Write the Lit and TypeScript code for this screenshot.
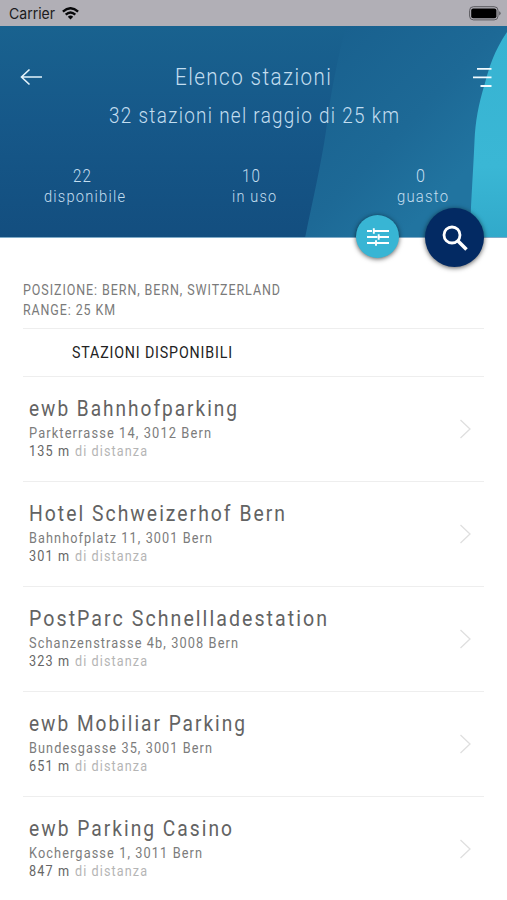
import { LitElement, html, css, svg } from "lit";
import { customElement, property } from "lit/decorators.js";

/** One line of condensed text, squeezed horizontally to a given width. */
@customElement("fit-text")
class FitText extends LitElement {
  @property({ type: Number }) width = 0;
  @property() text = "";

  static styles = css`
    :host { display: block; white-space: nowrap; }
    .t { display: inline-block; transform-origin: 0 50%; vertical-align: top; }
  `;

  render() {
    return html`<span class="t">${this.text}</span>`;
  }

  updated() {
    const el = this.renderRoot.querySelector(".t") as HTMLElement;
    const fit = () => {
      el.style.transform = "none";
      const spacing = parseFloat(getComputedStyle(el).letterSpacing) || 0;
      const natural = el.getBoundingClientRect().width - spacing;
      if (natural > 0) el.style.transform = `scaleX(${this.width / natural})`;
      this.style.width = `${this.width}px`;
    };
    fit();
    document.fonts.ready.then(fit);
  }
}

interface Station {
  name: string;
  nameW: number;
  address: string;
  addressW: number;
  distance: string;
  distanceW: number;
}

const stations: Station[] = [
  { name: "ewb Bahnhofparking", nameW: 208, address: "Parkterrasse 14, 3012 Bern", addressW: 182, distance: "135 m", distanceW: 40 },
  { name: "Hotel Schweizerhof Bern", nameW: 256, address: "Bahnhofplatz 11, 3001 Bern", addressW: 183, distance: "301 m", distanceW: 40 },
  { name: "PostParc Schnellladestation", nameW: 298, address: "Schanzenstrasse 4b, 3008 Bern", addressW: 209, distance: "323 m", distanceW: 40 },
  { name: "ewb Mobiliar Parking", nameW: 216, address: "Bundesgasse 35, 3001 Bern", addressW: 183, distance: "651 m", distanceW: 40 },
  { name: "ewb Parking Casino", nameW: 203, address: "Kochergasse 1, 3011 Bern", addressW: 173, distance: "847 m", distanceW: 40 },
];

const counters = [
  { value: "22", valueW: 18, label: "disponibile", labelW: 81 },
  { value: "10", valueW: 18, label: "in uso", labelW: 44 },
  { value: "0", valueW: 9, label: "guasto", labelW: 51 },
];

const backdrop = svg`
  <defs>
    <linearGradient id="base" x1="0" y1="0" x2="0" y2="1">
      <stop offset="0" stop-color="#19628f"/>
      <stop offset=".45" stop-color="#165889"/>
      <stop offset="1" stop-color="#134e7f"/>
    </linearGradient>
    <linearGradient id="mid" gradientUnits="userSpaceOnUse" x1="345" y1="0" x2="480" y2="130">
      <stop offset="0" stop-color="#19618f"/>
      <stop offset=".6" stop-color="#1d6996"/>
      <stop offset="1" stop-color="#2174a0"/>
    </linearGradient>
    <linearGradient id="cyan" x1="0" y1="0" x2="0" y2="1">
      <stop offset="0" stop-color="#37b3d2"/>
      <stop offset=".65" stop-color="#3ab7d5"/>
      <stop offset="1" stop-color="#31a9ca"/>
    </linearGradient>
  </defs>
  <rect width="507" height="212" fill="url(#base)"/>
  <path d="M305 212C313 173 321 139 326 105C330 70 338 30 346 0H507V212Z" fill="url(#mid)"/>
  <path d="M507 6C494 25 489 42 485 57C478 80 475.500 95 474.500 115C473 150 470.500 180 470 212H507Z" fill="url(#cyan)"/>
`;

@customElement("app-root")
class AppRoot extends LitElement {
  static styles = css`
    :host {
      display: flex;
      flex-direction: column;
      width: 507px;
      height: 900px;
      overflow: hidden;
      background: #fff;
      font-family: Roboto, "Liberation Sans", sans-serif;
      color: #666;
    }
    svg { display: block; flex: none; }
    .status {
      box-sizing: border-box;
      height: 26px;
      flex: none;
      display: flex;
      align-items: center;
      padding: 1px 6px 0 9px;
      background: #b1afb6;
      color: #1b1b20;
      font: 15px/24px Inter, sans-serif;
    }
    .wifi { margin-left: 7px; }
    .battery { margin-left: auto; }
    .header {
      position: relative;
      box-sizing: border-box;
      height: 212px;
      flex: none;
      padding-top: 36px;
      color: #c3def0;
      font-weight: 300;
      border-bottom: 1px solid #7fabc8;
    }
    .backdrop { position: absolute; left: 0; top: 0; }
    .bar, .subtitle, .counters { position: relative; }
    .bar {
      display: grid;
      grid-template-columns: 60px 1fr 60px;
      align-items: center;
      height: 30px;
    }
    .back { margin-left: 20px; }
    .menu { margin-left: 24px; }
    .title { justify-self: center; margin-right: 1px; font-size: 24.3px; line-height: 30px; letter-spacing: 1.7px; }
    .subtitle {
      display: flex;
      justify-content: center;
      margin-top: 9px;
      font-size: 22px;
      line-height: 30px;
      letter-spacing: 1.5px;
    }
    .counters {
      display: grid;
      grid-template-columns: repeat(3, 169px);
      margin-top: 35px;
      line-height: 20px;
      letter-spacing: 1.4px;
      font-weight: 350;
    }
    .counter { display: flex; flex-direction: column; align-items: center; }
    .value { font-size: 18px; margin-right: 5px; }
    .label { font-size: 17.2px; }
    .fab {
      position: absolute;
      display: grid;
      place-items: center;
      border-radius: 50%;
      box-shadow: 0 1px 5px rgba(0, 0, 0, .65);
    }
    .filter { left: 356px; top: 189px; width: 43px; height: 43px; background: #38b5d4; }
    .search { left: 425px; top: 182px; width: 59px; height: 59px; background: #032a63; }
    .content { padding: 42px 23px 0; flex: 1; }
    .meta {
      height: 48px;
      font-size: 15px;
      line-height: 20px;
      letter-spacing: 1.1px;
      color: #7a7a7a;
      border-bottom: 1px solid #eee;
    }
    .section {
      height: 47px;
      padding-left: 49px;
      font-size: 17px;
      line-height: 47px;
      letter-spacing: 1px;
      color: #222;
      border-bottom: 1px solid #eee;
    }
    .row {
      box-sizing: border-box;
      height: 105.1px;
      display: flex;
      justify-content: space-between;
      padding: 17px 13px 0 6px;
      border-bottom: 1px solid #eee;
    }
    .row:last-child { border: 0; }
    .name { font-size: 22px; line-height: 30px; letter-spacing: 2.3px; color: #636363; }
    .address { margin-top: 1px; font-size: 15px; line-height: 17.5px; letter-spacing: 1.3px; color: #7c7c7c; }
    .distance { display: flex; gap: 6px; font-size: 15px; line-height: 17px; letter-spacing: 1.3px; color: #666; }
    .muted { color: #b5b5b5; }
    .chevron { margin-top: 25px; }
  `;

  private row(s: Station) {
    return html`
      <div class="row">
        <div>
          <fit-text class="name" .width=${s.nameW} .text=${s.name}></fit-text>
          <fit-text class="address" .width=${s.addressW} .text=${s.address}></fit-text>
          <div class="distance">
            <fit-text .width=${s.distanceW} .text=${s.distance}></fit-text>
            <fit-text class="muted" .width=${72} .text=${"di distanza"}></fit-text>
          </div>
        </div>
        <svg class="chevron" width="12" height="20" viewBox="0 0 12 20" fill="none" stroke="#dfdfdf" stroke-width="1.3">
          <path d="M1.500 1L11 10L1.500 19"/>
        </svg>
      </div>
    `;
  }

  render() {
    return html`
      <div class="status">
        <fit-text .width=${46} .text=${"Carrier"}></fit-text>
        <svg class="wifi" width="17" height="13" viewBox="0 0 17 13" fill="none" stroke="#08080a" stroke-width="2.3">
          <path d="M.9 4.700Q8.500-2.300 16.100 4.700"/>
          <path d="M3.700 7.700Q8.500 3.200 13.300 7.700"/>
          <path d="M8.500 12.500L5.800 9.800Q8.500 7.400 11.200 9.800Z" fill="#08080a" stroke="none"/>
        </svg>
        <svg class="battery" width="32" height="15" viewBox="0 0 32 15">
          <rect x=".6" y=".7" width="28.4" height="13.2" rx="3.8" fill="none" stroke="#5b5a5f" stroke-width="1"/>
          <rect x="2.2" y="2.4" width="25.2" height="9.8" rx="2" fill="#000"/>
          <path d="M30.200 5.200Q31.600 5.800 31.600 7.300T30.200 9.400Z" fill="#5b5a5f"/>
        </svg>
      </div>

      <div class="header">
        <svg class="backdrop" width="507" height="211" viewBox="0 0 507 211">${backdrop}</svg>
        <div class="bar">
          <svg class="back" width="23" height="18" viewBox="0 0 23 18" fill="none" stroke="#e4f3fb" stroke-width="1.6">
            <path d="M22 9H1.500M9.500 1.500L1.500 9L9.500 16.500"/>
          </svg>
          <fit-text class="title" .width=${156} .text=${"Elenco stazioni"}></fit-text>
          <svg class="menu" width="22" height="22" viewBox="0 0 22 22" stroke="#f2fbff" stroke-width="1.8">
            <path d="M6 2.800H20.500M2 11.400H20.500M9.500 20H20.500"/>
          </svg>
        </div>
        <div class="subtitle">
          <fit-text .width=${290} .text=${"32 stazioni nel raggio di 25 km"}></fit-text>
        </div>
        <div class="counters">
          ${counters.map(
            (c) => html`<div class="counter">
              <fit-text class="value" .width=${c.valueW} .text=${c.value}></fit-text>
              <fit-text class="label" .width=${c.labelW} .text=${c.label}></fit-text>
            </div>`
          )}
        </div>
        <div class="fab filter">
          <svg width="22" height="18" viewBox="0 0 22 18" fill="none" stroke="#fff">
            <path stroke-width="1.8" d="M0 3H5M6 3H22M0 9H10.500M11.500 9H22M0 15H8M9 15H22"/>
            <path stroke-width="1.9" d="M6.800 .3V5.700M11.700 6.300V11.700M9 12.300V17.700"/>
          </svg>
        </div>
        <div class="fab search">
          <svg width="26" height="26" viewBox="0 0 26 26" fill="none" stroke="#fff" stroke-width="2.8">
            <circle cx="10" cy="10" r="8"/>
            <path stroke-width="3.5" d="M15.500 15.500L24.500 24.500"/>
          </svg>
        </div>
      </div>

      <div class="content">
        <div class="meta">
          <fit-text .width=${257} .text=${"POSIZIONE: BERN, BERN, SWITZERLAND"}></fit-text>
          <fit-text .width=${92} .text=${"RANGE: 25 KM"}></fit-text>
        </div>
        <div class="section">
          <fit-text .width=${160} .text=${"STAZIONI DISPONIBILI"}></fit-text>
        </div>
        ${stations.map((s) => this.row(s))}
      </div>
    `;
  }
}
